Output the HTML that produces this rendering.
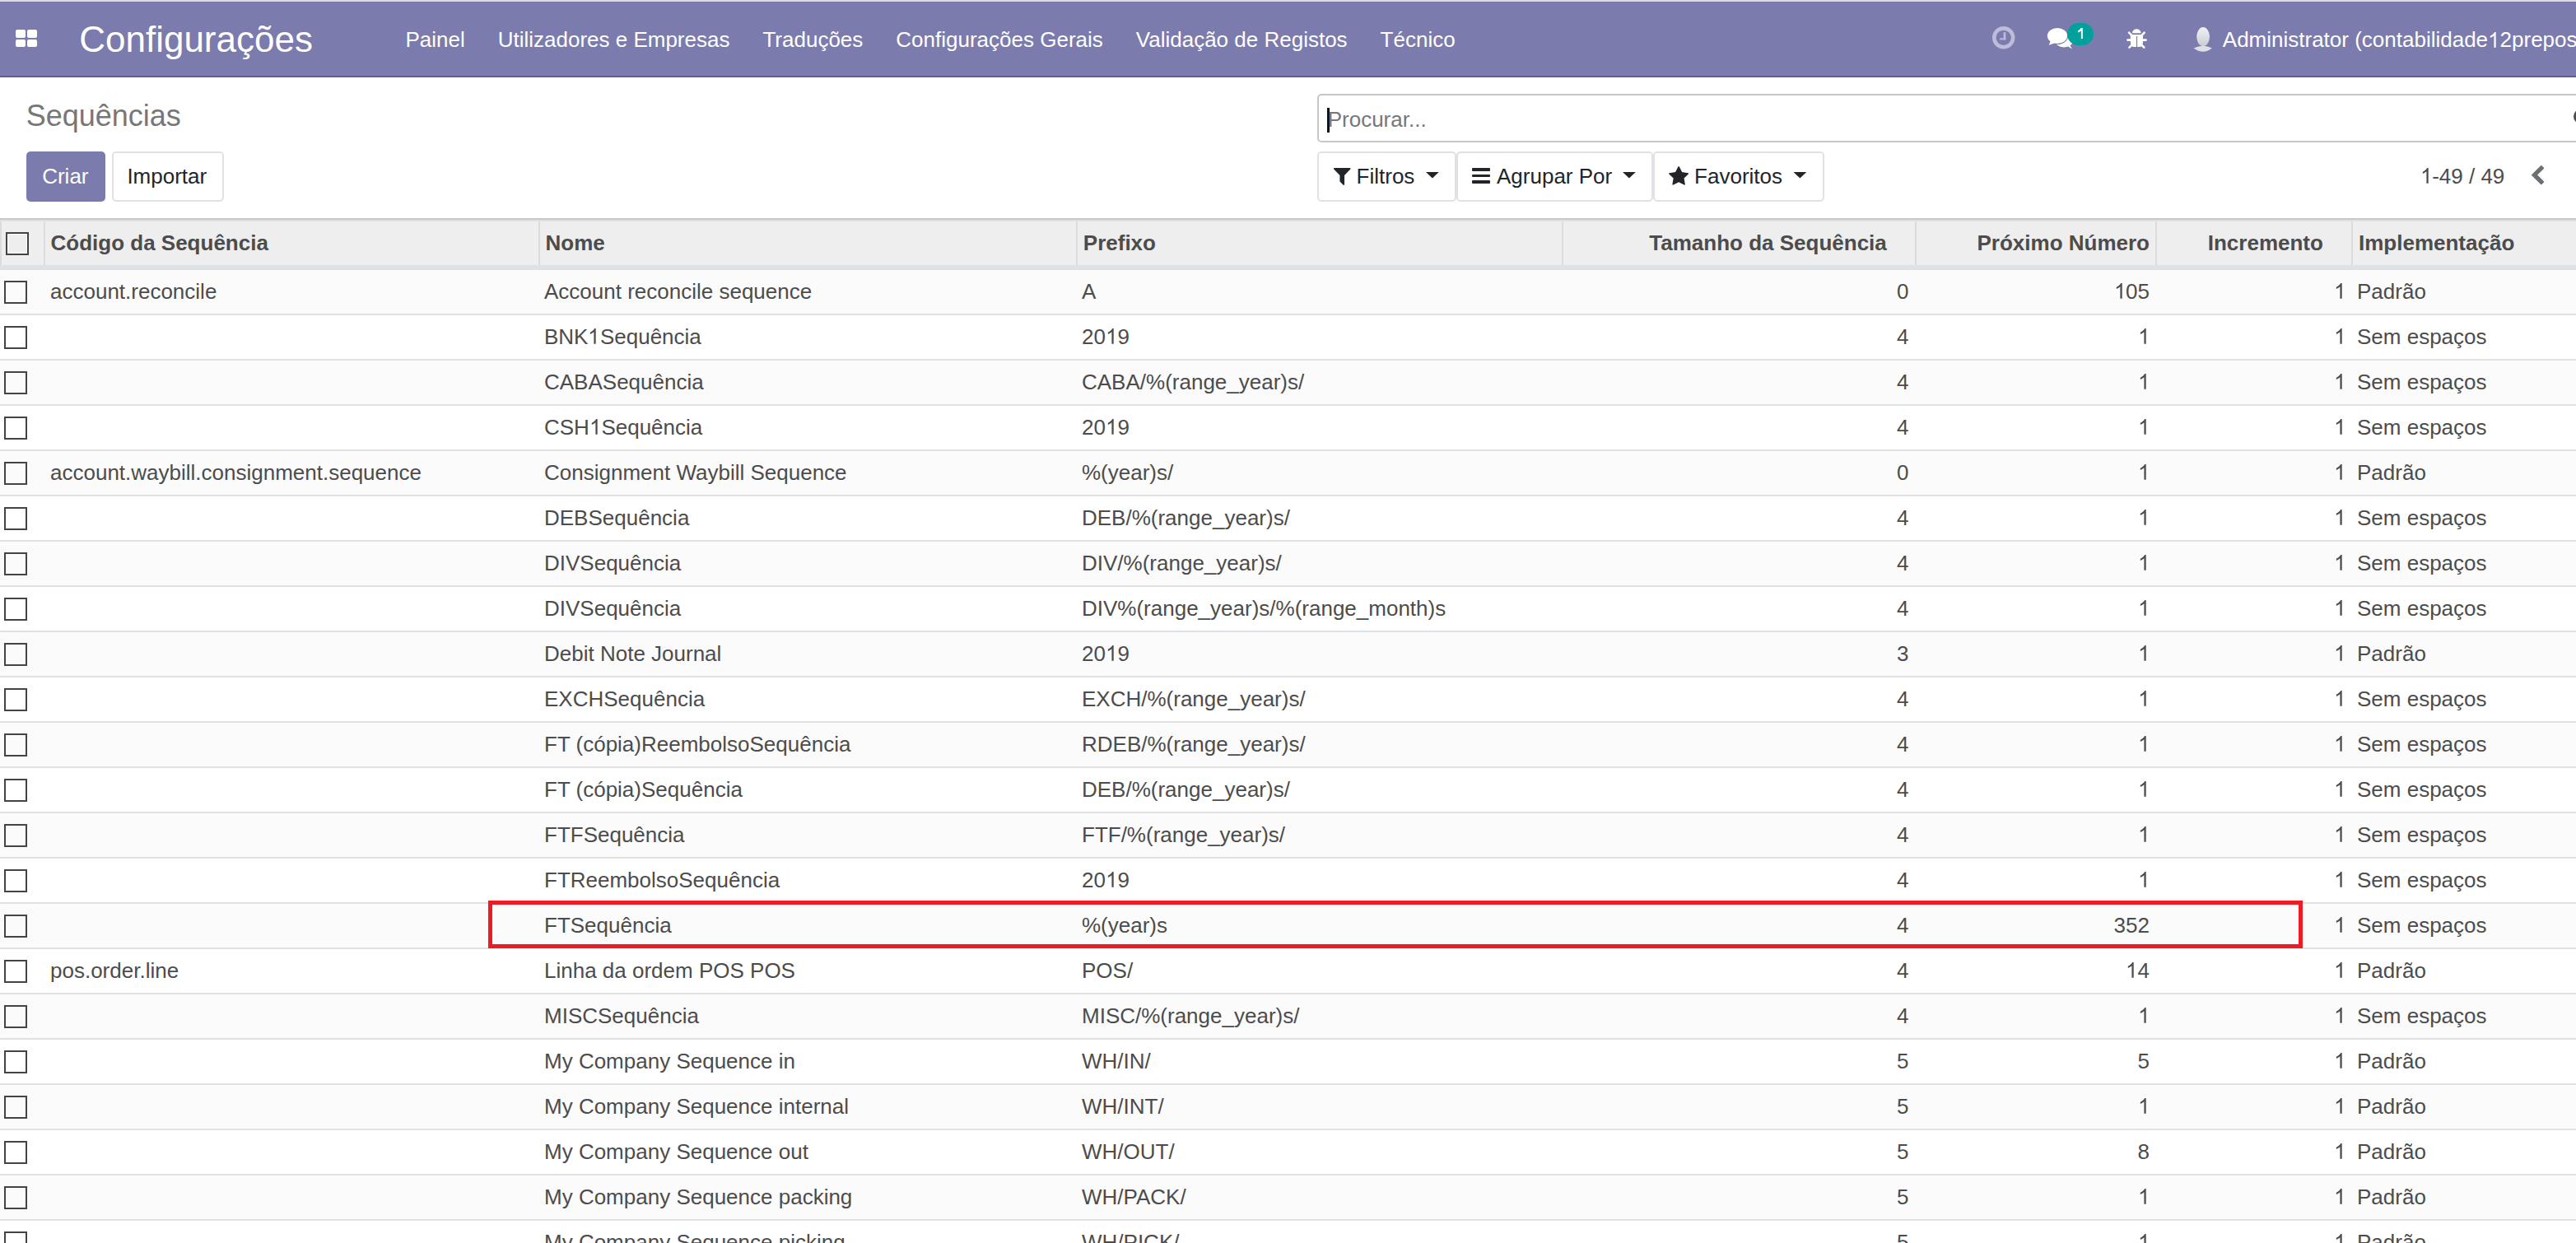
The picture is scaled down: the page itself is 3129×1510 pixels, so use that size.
<!DOCTYPE html>
<html><head><meta charset="utf-8"><title>Sequências - Odoo</title>
<style>
html,body{margin:0;padding:0;}
body{width:3129px;height:1510px;overflow:hidden;position:relative;background:#fff;font-family:"Liberation Sans",sans-serif;}
.t{position:absolute;white-space:pre;}
.cb{position:absolute;box-sizing:border-box;width:28px;height:28px;border:2px solid #444;background:transparent;}
svg{position:absolute;overflow:visible;}
.one{position:relative;color:transparent;}
.one svg{position:absolute;left:0;bottom:6px;width:0.5562em;height:0.71875em;}
</style></head><body>
<div style="position:absolute;left:0px;top:0px;width:3129px;height:2px;background:#dcdce0;"></div>
<div style="position:absolute;left:0px;top:2px;width:3129px;height:90px;background:#7c7bad;"></div>
<div style="position:absolute;left:0px;top:92px;width:3129px;height:2px;background:#5f5e96;"></div>
<div style="position:absolute;left:19.3px;top:35.8px;width:12.1px;height:10.1px;background:#fff;border-radius:2px;"></div>
<div style="position:absolute;left:32.8px;top:35.8px;width:11.8px;height:10.1px;background:#fff;border-radius:2px;"></div>
<div style="position:absolute;left:19.3px;top:47.6px;width:12.1px;height:9.5px;background:#fff;border-radius:2px;"></div>
<div style="position:absolute;left:32.8px;top:47.6px;width:11.8px;height:9.5px;background:#fff;border-radius:2px;"></div>
<div class="t" style="left:96.20px;top:25.75px;font-size:44px;line-height:44px;color:#fff;">Configurações</div>
<div class="t" style="left:492.40px;top:35.29px;font-size:26px;line-height:26px;color:#fff;">Painel</div>
<div class="t" style="left:604.68px;top:35.29px;font-size:26px;line-height:26px;color:#fff;">Utilizadores e Empresas</div>
<div class="t" style="left:926.46px;top:35.29px;font-size:26px;line-height:26px;color:#fff;">Traduções</div>
<div class="t" style="left:1088.34px;top:35.29px;font-size:26px;line-height:26px;color:#fff;">Configurações Gerais</div>
<div class="t" style="left:1379.81px;top:35.29px;font-size:26px;line-height:26px;color:#fff;">Validação de Registos</div>
<div class="t" style="left:1676.60px;top:35.29px;font-size:26px;line-height:26px;color:#fff;">Técnico</div>
<svg style="left:2415px;top:28px" width="40" height="36" viewBox="0 0 40 36"><circle cx="18.7" cy="17.8" r="11.45" fill="none" stroke="#bebdd9" stroke-width="4.6"/><rect x="18.6" y="11.2" width="2.7" height="9.1" fill="#bebdd9"/><rect x="13.9" y="18.4" width="7.4" height="1.9" fill="#bebdd9"/></svg>
<svg style="left:2480px;top:24px" width="70" height="42" viewBox="0 0 70 42"><ellipse cx="27" cy="24.5" rx="11.5" ry="9" fill="#fff"/><path d="M30 31 L36.8 35.5 L34 30 Z" fill="#fff"/><ellipse cx="19" cy="19.5" rx="13.2" ry="10.5" fill="#7c7bad"/><ellipse cx="19" cy="19.5" rx="12.1" ry="9.45" fill="#fff"/><path d="M11 25 L8.8 30.7 L17 28 Z" fill="#fff"/></svg>
<div style="position:absolute;left:2511px;top:28px;width:32px;height:27px;border-radius:13.5px;background:#00a09d;"></div>
<svg style="left:2520px;top:30px" width="14" height="20" viewBox="0 0 14 20"><path d="M7.9 4 H9.8 V17 H7.9 V7.4 Q6 8.8 3.9 9.6 V7.6 Q6.3 6.4 7.6 4 Z" fill="#fff"/></svg>
<svg style="left:2575px;top:28px" width="40" height="36" viewBox="0 0 40 36"><path d="M15 12.2 A5.3 5 0 0 1 25.6 12.2 Z" fill="#fff"/><path d="M12.8 14 H28 V22 Q28 29 24 29 H16.8 Q12.8 29 12.8 22 Z" fill="#fff"/><rect x="20" y="16" width="1.1" height="13.5" fill="#7c7bad"/><g stroke="#fff" stroke-width="2.6" stroke-linecap="round"><line x1="11" y1="11.6" x2="14.5" y2="15.2"/><line x1="29.7" y1="11.6" x2="26.3" y2="15.2"/><line x1="9.4" y1="20.6" x2="13" y2="20.6"/><line x1="31.5" y1="20.6" x2="28" y2="20.6"/><line x1="11.4" y1="29.7" x2="14.8" y2="26.3"/><line x1="29.4" y1="29.7" x2="26" y2="26.3"/></g></svg>
<svg style="left:2655px;top:25px" width="50" height="45" viewBox="0 0 50 45"><defs><linearGradient id="ag" x1="0" y1="0" x2="0" y2="1"><stop offset="0" stop-color="#f0f1f4"/><stop offset="1" stop-color="#c9cdd5"/></linearGradient></defs><path d="M9.6 33.6 Q21 28 32 33.6 Q21 42 9.6 33.6 Z" fill="#dcdfe4"/><ellipse cx="21.1" cy="19.6" rx="7.9" ry="11.5" fill="url(#ag)"/></svg>
<div class="t" style="left:2699.80px;top:35.29px;font-size:26px;line-height:26px;color:#fff;">Administrator (contabilidade<span class="one">1<svg viewBox="0 0 1139 1472" style="fill:#fff"><path transform="matrix(1 0 0 -1 0 1472)" d="M763 0H583V1147Q518 1085 412 1023Q306 961 223 930V1104Q373 1175 485 1276Q597 1377 644 1472H763Z"/></svg></span>2prepos</div>
<div class="t" style="left:31.70px;top:123.33px;font-size:36px;line-height:36px;color:#777777;">Sequências</div>
<div style="position:absolute;left:32px;top:184px;width:96px;height:61px;background:#7c7bad;border-radius:5px;"></div>
<div class="t" style="left:51.20px;top:201.19px;font-size:26px;line-height:26px;color:#fff;">Criar</div>
<div style="position:absolute;left:136px;top:184px;width:136px;height:61px;box-sizing:border-box;border:2px solid #dee2e6;border-radius:5px;background:#fff;"></div>
<div class="t" style="left:154.40px;top:201.19px;font-size:26px;line-height:26px;color:#212529;">Importar</div>
<div style="position:absolute;left:1600px;top:114px;width:1600px;height:59px;box-sizing:border-box;border:2px solid #c8c8c8;border-radius:5px;background:#fff;"></div>
<div style="position:absolute;left:1612px;top:131px;width:3px;height:30px;background:#111;"></div>
<div class="t" style="left:1612.70px;top:132.19px;font-size:26px;line-height:26px;color:#777777;">Procurar...</div>
<div style="position:absolute;left:3126px;top:133px;width:16px;height:17px;border:4.5px solid #4c4c4c;border-radius:50%;box-sizing:border-box;"></div>
<div style="position:absolute;left:1600px;top:184px;width:168.5px;height:61px;box-sizing:border-box;border:2px solid #dee2e6;border-radius:5px;background:#fff;"></div>
<div style="position:absolute;left:1769.3px;top:184px;width:238.5px;height:61px;box-sizing:border-box;border:2px solid #dee2e6;border-radius:5px;background:#fff;"></div>
<div style="position:absolute;left:2008.3px;top:184px;width:208.00000000000023px;height:61px;box-sizing:border-box;border:2px solid #dee2e6;border-radius:5px;background:#fff;"></div>
<svg style="left:1619.9px;top:204.2px" width="20.6" height="20.9" viewBox="5 210 1405 1408" preserveAspectRatio="none"><path d="M1403 249q17 41-14 70l-493 493v742q0 42-39 59-13 5-25 5-27 0-45-19l-256-256q-19-19-19-45v-486l-493-493q-31-29-14-70 17-39 59-39h1280q42 0 59 39z" fill="#212529"/></svg>
<div class="t" style="left:1647.60px;top:200.89px;font-size:26px;line-height:26px;color:#212529;">Filtros</div>
<svg style="left:1732px;top:208.8px" width="16" height="8" viewBox="0 0 16 8"><path d="M0 0 H15.8 L7.9 7.4 Z" fill="#212529"/></svg>
<div style="position:absolute;left:1787.7px;top:204.2px;width:22.5px;height:3.6px;background:#212529;border-radius:1px;"></div>
<div style="position:absolute;left:1787.7px;top:211.7px;width:22.5px;height:3.6px;background:#212529;border-radius:1px;"></div>
<div style="position:absolute;left:1787.7px;top:219.2px;width:22.5px;height:3.6px;background:#212529;border-radius:1px;"></div>
<div class="t" style="left:1818.00px;top:200.89px;font-size:26px;line-height:26px;color:#212529;">Agrupar Por</div>
<svg style="left:1971.2px;top:208.8px" width="16" height="8" viewBox="0 0 16 8"><path d="M0 0 H15.8 L7.9 7.4 Z" fill="#212529"/></svg>
<svg style="left:2026.8px;top:201.5px" width="24.2" height="22.8" viewBox="64 32 1664 1588" preserveAspectRatio="none"><path d="M1728 647q0 22-26 48l-363 354 86 500q1 7 1 20 0 21-10.5 35.5t-30.5 14.5q-19 0-40-12l-449-236-449 236q-21 12-40 12-21 0-31.5-14.5t-10.5-35.5q0-6 2-20l86-500-364-354q-25-27-25-48 0-37 56-46l502-73 225-455q19-41 49-41t49 41l225 455 502 73q56 9 56 46z" fill="#212529"/></svg>
<div class="t" style="left:2058.10px;top:200.89px;font-size:26px;line-height:26px;color:#212529;">Favoritos</div>
<svg style="left:2178px;top:208.8px" width="17" height="8" viewBox="0 0 16 8"><path d="M0 0 H15.8 L7.9 7.4 Z" fill="#212529"/></svg>
<div class="t" style="left:2939.70px;top:200.89px;font-size:26px;line-height:26px;color:#4c4c4c;"><span class="one">1<svg viewBox="0 0 1139 1472" style="fill:#4c4c4c"><path transform="matrix(1 0 0 -1 0 1472)" d="M763 0H583V1147Q518 1085 412 1023Q306 961 223 930V1104Q373 1175 485 1276Q597 1377 644 1472H763Z"/></svg></span>-49 / 49</div>
<svg style="left:3075px;top:201px" width="15.2" height="23.2" viewBox="410 26 1036 1612" preserveAspectRatio="none"><path d="M1427 301l-531 531 531 531q19 19 19 45t-19 45l-166 166q-19 19-45 19t-45-19l-742-742q-19-19-19-45t19-45l742-742q19-19 45-19t45 19l166 166q19 19 19 45t-19 45z" fill="#6c6f73"/></svg>
<div style="position:absolute;left:0px;top:265px;width:3129px;height:2px;background:#c8c8c8;"></div>
<div style="position:absolute;left:0px;top:267px;width:3129px;height:2px;background:#dee2e6;"></div>
<div style="position:absolute;left:0px;top:269px;width:3129px;height:53px;background:#eeeeee;"></div>
<div style="position:absolute;left:0px;top:322px;width:3129px;height:6px;background:#dee2e6;"></div>
<div style="position:absolute;left:0px;top:269px;width:2px;height:53px;background:#dcdcdc;"></div>
<div style="position:absolute;left:53px;top:269px;width:2px;height:53px;background:#dcdcdc;"></div>
<div style="position:absolute;left:654px;top:269px;width:2px;height:53px;background:#dcdcdc;"></div>
<div style="position:absolute;left:1307px;top:269px;width:2px;height:53px;background:#dcdcdc;"></div>
<div style="position:absolute;left:1897px;top:269px;width:2px;height:53px;background:#dcdcdc;"></div>
<div style="position:absolute;left:2326px;top:269px;width:2px;height:53px;background:#dcdcdc;"></div>
<div style="position:absolute;left:2618px;top:269px;width:2px;height:53px;background:#dcdcdc;"></div>
<div style="position:absolute;left:2856px;top:269px;width:2px;height:53px;background:#dcdcdc;"></div>
<div class="cb" style="left:7px;top:282px;background:#eee;box-shadow:inset 0 0 0 1px #fff;"></div>
<div class="t" style="left:61.50px;top:281.99px;font-size:26px;line-height:26px;color:#4c4c4c;font-weight:bold;">Código da Sequência</div>
<div class="t" style="left:662.50px;top:281.99px;font-size:26px;line-height:26px;color:#4c4c4c;font-weight:bold;">Nome</div>
<div class="t" style="left:1315.80px;top:281.99px;font-size:26px;line-height:26px;color:#4c4c4c;font-weight:bold;">Prefixo</div>
<div class="t" style="right:837.20px;top:281.99px;font-size:26px;line-height:26px;color:#4c4c4c;font-weight:bold;">Tamanho da Sequência</div>
<div class="t" style="right:518.00px;top:281.99px;font-size:26px;line-height:26px;color:#4c4c4c;font-weight:bold;">Próximo Número</div>
<div class="t" style="right:307.10px;top:281.99px;font-size:26px;line-height:26px;color:#4c4c4c;font-weight:bold;">Incremento</div>
<div class="t" style="left:2865.00px;top:281.99px;font-size:26px;line-height:26px;color:#4c4c4c;font-weight:bold;">Implementação</div>
<div style="position:absolute;left:0px;top:328px;width:3129px;height:53px;background:#fbfbfb;"></div>
<div style="position:absolute;left:0px;top:381px;width:3129px;height:2px;background:#dee2e6;"></div>
<div class="cb" style="left:5px;top:341px;"></div>
<div class="t" style="left:61.00px;top:340.99px;font-size:26px;line-height:26px;color:#4c4c4c;">account.reconcile</div>
<div class="t" style="left:661.00px;top:340.99px;font-size:26px;line-height:26px;color:#4c4c4c;">Account reconcile sequence</div>
<div class="t" style="left:1314.00px;top:340.99px;font-size:26px;line-height:26px;color:#4c4c4c;">A</div>
<div class="t" style="right:810.50px;top:340.99px;font-size:26px;line-height:26px;color:#4c4c4c;">0</div>
<div class="t" style="right:518.00px;top:340.99px;font-size:26px;line-height:26px;color:#4c4c4c;"><span class="one">1<svg viewBox="0 0 1139 1472" style="fill:#4c4c4c"><path transform="matrix(1 0 0 -1 0 1472)" d="M763 0H583V1147Q518 1085 412 1023Q306 961 223 930V1104Q373 1175 485 1276Q597 1377 644 1472H763Z"/></svg></span>05</div>
<div class="t" style="right:279.50px;top:340.99px;font-size:26px;line-height:26px;color:#4c4c4c;"><span class="one">1<svg viewBox="0 0 1139 1472" style="fill:#4c4c4c"><path transform="matrix(1 0 0 -1 0 1472)" d="M763 0H583V1147Q518 1085 412 1023Q306 961 223 930V1104Q373 1175 485 1276Q597 1377 644 1472H763Z"/></svg></span></div>
<div class="t" style="left:2863.00px;top:340.99px;font-size:26px;line-height:26px;color:#4c4c4c;">Padrão</div>
<div style="position:absolute;left:0px;top:383px;width:3129px;height:53px;background:#ffffff;"></div>
<div style="position:absolute;left:0px;top:436px;width:3129px;height:2px;background:#dee2e6;"></div>
<div class="cb" style="left:5px;top:396px;"></div>
<div class="t" style="left:661.00px;top:395.99px;font-size:26px;line-height:26px;color:#4c4c4c;">BNK<span class="one">1<svg viewBox="0 0 1139 1472" style="fill:#4c4c4c"><path transform="matrix(1 0 0 -1 0 1472)" d="M763 0H583V1147Q518 1085 412 1023Q306 961 223 930V1104Q373 1175 485 1276Q597 1377 644 1472H763Z"/></svg></span>Sequência</div>
<div class="t" style="left:1314.00px;top:395.99px;font-size:26px;line-height:26px;color:#4c4c4c;">20<span class="one">1<svg viewBox="0 0 1139 1472" style="fill:#4c4c4c"><path transform="matrix(1 0 0 -1 0 1472)" d="M763 0H583V1147Q518 1085 412 1023Q306 961 223 930V1104Q373 1175 485 1276Q597 1377 644 1472H763Z"/></svg></span>9</div>
<div class="t" style="right:810.50px;top:395.99px;font-size:26px;line-height:26px;color:#4c4c4c;">4</div>
<div class="t" style="right:518.00px;top:395.99px;font-size:26px;line-height:26px;color:#4c4c4c;"><span class="one">1<svg viewBox="0 0 1139 1472" style="fill:#4c4c4c"><path transform="matrix(1 0 0 -1 0 1472)" d="M763 0H583V1147Q518 1085 412 1023Q306 961 223 930V1104Q373 1175 485 1276Q597 1377 644 1472H763Z"/></svg></span></div>
<div class="t" style="right:279.50px;top:395.99px;font-size:26px;line-height:26px;color:#4c4c4c;"><span class="one">1<svg viewBox="0 0 1139 1472" style="fill:#4c4c4c"><path transform="matrix(1 0 0 -1 0 1472)" d="M763 0H583V1147Q518 1085 412 1023Q306 961 223 930V1104Q373 1175 485 1276Q597 1377 644 1472H763Z"/></svg></span></div>
<div class="t" style="left:2863.00px;top:395.99px;font-size:26px;line-height:26px;color:#4c4c4c;">Sem espaços</div>
<div style="position:absolute;left:0px;top:438px;width:3129px;height:53px;background:#fbfbfb;"></div>
<div style="position:absolute;left:0px;top:491px;width:3129px;height:2px;background:#dee2e6;"></div>
<div class="cb" style="left:5px;top:451px;"></div>
<div class="t" style="left:661.00px;top:450.99px;font-size:26px;line-height:26px;color:#4c4c4c;">CABASequência</div>
<div class="t" style="left:1314.00px;top:450.99px;font-size:26px;line-height:26px;color:#4c4c4c;">CABA/%(range_year)s/</div>
<div class="t" style="right:810.50px;top:450.99px;font-size:26px;line-height:26px;color:#4c4c4c;">4</div>
<div class="t" style="right:518.00px;top:450.99px;font-size:26px;line-height:26px;color:#4c4c4c;"><span class="one">1<svg viewBox="0 0 1139 1472" style="fill:#4c4c4c"><path transform="matrix(1 0 0 -1 0 1472)" d="M763 0H583V1147Q518 1085 412 1023Q306 961 223 930V1104Q373 1175 485 1276Q597 1377 644 1472H763Z"/></svg></span></div>
<div class="t" style="right:279.50px;top:450.99px;font-size:26px;line-height:26px;color:#4c4c4c;"><span class="one">1<svg viewBox="0 0 1139 1472" style="fill:#4c4c4c"><path transform="matrix(1 0 0 -1 0 1472)" d="M763 0H583V1147Q518 1085 412 1023Q306 961 223 930V1104Q373 1175 485 1276Q597 1377 644 1472H763Z"/></svg></span></div>
<div class="t" style="left:2863.00px;top:450.99px;font-size:26px;line-height:26px;color:#4c4c4c;">Sem espaços</div>
<div style="position:absolute;left:0px;top:493px;width:3129px;height:53px;background:#ffffff;"></div>
<div style="position:absolute;left:0px;top:546px;width:3129px;height:2px;background:#dee2e6;"></div>
<div class="cb" style="left:5px;top:506px;"></div>
<div class="t" style="left:661.00px;top:505.99px;font-size:26px;line-height:26px;color:#4c4c4c;">CSH<span class="one">1<svg viewBox="0 0 1139 1472" style="fill:#4c4c4c"><path transform="matrix(1 0 0 -1 0 1472)" d="M763 0H583V1147Q518 1085 412 1023Q306 961 223 930V1104Q373 1175 485 1276Q597 1377 644 1472H763Z"/></svg></span>Sequência</div>
<div class="t" style="left:1314.00px;top:505.99px;font-size:26px;line-height:26px;color:#4c4c4c;">20<span class="one">1<svg viewBox="0 0 1139 1472" style="fill:#4c4c4c"><path transform="matrix(1 0 0 -1 0 1472)" d="M763 0H583V1147Q518 1085 412 1023Q306 961 223 930V1104Q373 1175 485 1276Q597 1377 644 1472H763Z"/></svg></span>9</div>
<div class="t" style="right:810.50px;top:505.99px;font-size:26px;line-height:26px;color:#4c4c4c;">4</div>
<div class="t" style="right:518.00px;top:505.99px;font-size:26px;line-height:26px;color:#4c4c4c;"><span class="one">1<svg viewBox="0 0 1139 1472" style="fill:#4c4c4c"><path transform="matrix(1 0 0 -1 0 1472)" d="M763 0H583V1147Q518 1085 412 1023Q306 961 223 930V1104Q373 1175 485 1276Q597 1377 644 1472H763Z"/></svg></span></div>
<div class="t" style="right:279.50px;top:505.99px;font-size:26px;line-height:26px;color:#4c4c4c;"><span class="one">1<svg viewBox="0 0 1139 1472" style="fill:#4c4c4c"><path transform="matrix(1 0 0 -1 0 1472)" d="M763 0H583V1147Q518 1085 412 1023Q306 961 223 930V1104Q373 1175 485 1276Q597 1377 644 1472H763Z"/></svg></span></div>
<div class="t" style="left:2863.00px;top:505.99px;font-size:26px;line-height:26px;color:#4c4c4c;">Sem espaços</div>
<div style="position:absolute;left:0px;top:548px;width:3129px;height:53px;background:#fbfbfb;"></div>
<div style="position:absolute;left:0px;top:601px;width:3129px;height:2px;background:#dee2e6;"></div>
<div class="cb" style="left:5px;top:561px;"></div>
<div class="t" style="left:61.00px;top:560.99px;font-size:26px;line-height:26px;color:#4c4c4c;">account.waybill.consignment.sequence</div>
<div class="t" style="left:661.00px;top:560.99px;font-size:26px;line-height:26px;color:#4c4c4c;">Consignment Waybill Sequence</div>
<div class="t" style="left:1314.00px;top:560.99px;font-size:26px;line-height:26px;color:#4c4c4c;">%(year)s/</div>
<div class="t" style="right:810.50px;top:560.99px;font-size:26px;line-height:26px;color:#4c4c4c;">0</div>
<div class="t" style="right:518.00px;top:560.99px;font-size:26px;line-height:26px;color:#4c4c4c;"><span class="one">1<svg viewBox="0 0 1139 1472" style="fill:#4c4c4c"><path transform="matrix(1 0 0 -1 0 1472)" d="M763 0H583V1147Q518 1085 412 1023Q306 961 223 930V1104Q373 1175 485 1276Q597 1377 644 1472H763Z"/></svg></span></div>
<div class="t" style="right:279.50px;top:560.99px;font-size:26px;line-height:26px;color:#4c4c4c;"><span class="one">1<svg viewBox="0 0 1139 1472" style="fill:#4c4c4c"><path transform="matrix(1 0 0 -1 0 1472)" d="M763 0H583V1147Q518 1085 412 1023Q306 961 223 930V1104Q373 1175 485 1276Q597 1377 644 1472H763Z"/></svg></span></div>
<div class="t" style="left:2863.00px;top:560.99px;font-size:26px;line-height:26px;color:#4c4c4c;">Padrão</div>
<div style="position:absolute;left:0px;top:603px;width:3129px;height:53px;background:#ffffff;"></div>
<div style="position:absolute;left:0px;top:656px;width:3129px;height:2px;background:#dee2e6;"></div>
<div class="cb" style="left:5px;top:616px;"></div>
<div class="t" style="left:661.00px;top:615.99px;font-size:26px;line-height:26px;color:#4c4c4c;">DEBSequência</div>
<div class="t" style="left:1314.00px;top:615.99px;font-size:26px;line-height:26px;color:#4c4c4c;">DEB/%(range_year)s/</div>
<div class="t" style="right:810.50px;top:615.99px;font-size:26px;line-height:26px;color:#4c4c4c;">4</div>
<div class="t" style="right:518.00px;top:615.99px;font-size:26px;line-height:26px;color:#4c4c4c;"><span class="one">1<svg viewBox="0 0 1139 1472" style="fill:#4c4c4c"><path transform="matrix(1 0 0 -1 0 1472)" d="M763 0H583V1147Q518 1085 412 1023Q306 961 223 930V1104Q373 1175 485 1276Q597 1377 644 1472H763Z"/></svg></span></div>
<div class="t" style="right:279.50px;top:615.99px;font-size:26px;line-height:26px;color:#4c4c4c;"><span class="one">1<svg viewBox="0 0 1139 1472" style="fill:#4c4c4c"><path transform="matrix(1 0 0 -1 0 1472)" d="M763 0H583V1147Q518 1085 412 1023Q306 961 223 930V1104Q373 1175 485 1276Q597 1377 644 1472H763Z"/></svg></span></div>
<div class="t" style="left:2863.00px;top:615.99px;font-size:26px;line-height:26px;color:#4c4c4c;">Sem espaços</div>
<div style="position:absolute;left:0px;top:658px;width:3129px;height:53px;background:#fbfbfb;"></div>
<div style="position:absolute;left:0px;top:711px;width:3129px;height:2px;background:#dee2e6;"></div>
<div class="cb" style="left:5px;top:671px;"></div>
<div class="t" style="left:661.00px;top:670.99px;font-size:26px;line-height:26px;color:#4c4c4c;">DIVSequência</div>
<div class="t" style="left:1314.00px;top:670.99px;font-size:26px;line-height:26px;color:#4c4c4c;">DIV/%(range_year)s/</div>
<div class="t" style="right:810.50px;top:670.99px;font-size:26px;line-height:26px;color:#4c4c4c;">4</div>
<div class="t" style="right:518.00px;top:670.99px;font-size:26px;line-height:26px;color:#4c4c4c;"><span class="one">1<svg viewBox="0 0 1139 1472" style="fill:#4c4c4c"><path transform="matrix(1 0 0 -1 0 1472)" d="M763 0H583V1147Q518 1085 412 1023Q306 961 223 930V1104Q373 1175 485 1276Q597 1377 644 1472H763Z"/></svg></span></div>
<div class="t" style="right:279.50px;top:670.99px;font-size:26px;line-height:26px;color:#4c4c4c;"><span class="one">1<svg viewBox="0 0 1139 1472" style="fill:#4c4c4c"><path transform="matrix(1 0 0 -1 0 1472)" d="M763 0H583V1147Q518 1085 412 1023Q306 961 223 930V1104Q373 1175 485 1276Q597 1377 644 1472H763Z"/></svg></span></div>
<div class="t" style="left:2863.00px;top:670.99px;font-size:26px;line-height:26px;color:#4c4c4c;">Sem espaços</div>
<div style="position:absolute;left:0px;top:713px;width:3129px;height:53px;background:#ffffff;"></div>
<div style="position:absolute;left:0px;top:766px;width:3129px;height:2px;background:#dee2e6;"></div>
<div class="cb" style="left:5px;top:726px;"></div>
<div class="t" style="left:661.00px;top:725.99px;font-size:26px;line-height:26px;color:#4c4c4c;">DIVSequência</div>
<div class="t" style="left:1314.00px;top:725.99px;font-size:26px;line-height:26px;color:#4c4c4c;">DIV%(range_year)s/%(range_month)s</div>
<div class="t" style="right:810.50px;top:725.99px;font-size:26px;line-height:26px;color:#4c4c4c;">4</div>
<div class="t" style="right:518.00px;top:725.99px;font-size:26px;line-height:26px;color:#4c4c4c;"><span class="one">1<svg viewBox="0 0 1139 1472" style="fill:#4c4c4c"><path transform="matrix(1 0 0 -1 0 1472)" d="M763 0H583V1147Q518 1085 412 1023Q306 961 223 930V1104Q373 1175 485 1276Q597 1377 644 1472H763Z"/></svg></span></div>
<div class="t" style="right:279.50px;top:725.99px;font-size:26px;line-height:26px;color:#4c4c4c;"><span class="one">1<svg viewBox="0 0 1139 1472" style="fill:#4c4c4c"><path transform="matrix(1 0 0 -1 0 1472)" d="M763 0H583V1147Q518 1085 412 1023Q306 961 223 930V1104Q373 1175 485 1276Q597 1377 644 1472H763Z"/></svg></span></div>
<div class="t" style="left:2863.00px;top:725.99px;font-size:26px;line-height:26px;color:#4c4c4c;">Sem espaços</div>
<div style="position:absolute;left:0px;top:768px;width:3129px;height:53px;background:#fbfbfb;"></div>
<div style="position:absolute;left:0px;top:821px;width:3129px;height:2px;background:#dee2e6;"></div>
<div class="cb" style="left:5px;top:781px;"></div>
<div class="t" style="left:661.00px;top:780.99px;font-size:26px;line-height:26px;color:#4c4c4c;">Debit Note Journal</div>
<div class="t" style="left:1314.00px;top:780.99px;font-size:26px;line-height:26px;color:#4c4c4c;">20<span class="one">1<svg viewBox="0 0 1139 1472" style="fill:#4c4c4c"><path transform="matrix(1 0 0 -1 0 1472)" d="M763 0H583V1147Q518 1085 412 1023Q306 961 223 930V1104Q373 1175 485 1276Q597 1377 644 1472H763Z"/></svg></span>9</div>
<div class="t" style="right:810.50px;top:780.99px;font-size:26px;line-height:26px;color:#4c4c4c;">3</div>
<div class="t" style="right:518.00px;top:780.99px;font-size:26px;line-height:26px;color:#4c4c4c;"><span class="one">1<svg viewBox="0 0 1139 1472" style="fill:#4c4c4c"><path transform="matrix(1 0 0 -1 0 1472)" d="M763 0H583V1147Q518 1085 412 1023Q306 961 223 930V1104Q373 1175 485 1276Q597 1377 644 1472H763Z"/></svg></span></div>
<div class="t" style="right:279.50px;top:780.99px;font-size:26px;line-height:26px;color:#4c4c4c;"><span class="one">1<svg viewBox="0 0 1139 1472" style="fill:#4c4c4c"><path transform="matrix(1 0 0 -1 0 1472)" d="M763 0H583V1147Q518 1085 412 1023Q306 961 223 930V1104Q373 1175 485 1276Q597 1377 644 1472H763Z"/></svg></span></div>
<div class="t" style="left:2863.00px;top:780.99px;font-size:26px;line-height:26px;color:#4c4c4c;">Padrão</div>
<div style="position:absolute;left:0px;top:823px;width:3129px;height:53px;background:#ffffff;"></div>
<div style="position:absolute;left:0px;top:876px;width:3129px;height:2px;background:#dee2e6;"></div>
<div class="cb" style="left:5px;top:836px;"></div>
<div class="t" style="left:661.00px;top:835.99px;font-size:26px;line-height:26px;color:#4c4c4c;">EXCHSequência</div>
<div class="t" style="left:1314.00px;top:835.99px;font-size:26px;line-height:26px;color:#4c4c4c;">EXCH/%(range_year)s/</div>
<div class="t" style="right:810.50px;top:835.99px;font-size:26px;line-height:26px;color:#4c4c4c;">4</div>
<div class="t" style="right:518.00px;top:835.99px;font-size:26px;line-height:26px;color:#4c4c4c;"><span class="one">1<svg viewBox="0 0 1139 1472" style="fill:#4c4c4c"><path transform="matrix(1 0 0 -1 0 1472)" d="M763 0H583V1147Q518 1085 412 1023Q306 961 223 930V1104Q373 1175 485 1276Q597 1377 644 1472H763Z"/></svg></span></div>
<div class="t" style="right:279.50px;top:835.99px;font-size:26px;line-height:26px;color:#4c4c4c;"><span class="one">1<svg viewBox="0 0 1139 1472" style="fill:#4c4c4c"><path transform="matrix(1 0 0 -1 0 1472)" d="M763 0H583V1147Q518 1085 412 1023Q306 961 223 930V1104Q373 1175 485 1276Q597 1377 644 1472H763Z"/></svg></span></div>
<div class="t" style="left:2863.00px;top:835.99px;font-size:26px;line-height:26px;color:#4c4c4c;">Sem espaços</div>
<div style="position:absolute;left:0px;top:878px;width:3129px;height:53px;background:#fbfbfb;"></div>
<div style="position:absolute;left:0px;top:931px;width:3129px;height:2px;background:#dee2e6;"></div>
<div class="cb" style="left:5px;top:891px;"></div>
<div class="t" style="left:661.00px;top:890.99px;font-size:26px;line-height:26px;color:#4c4c4c;">FT (cópia)ReembolsoSequência</div>
<div class="t" style="left:1314.00px;top:890.99px;font-size:26px;line-height:26px;color:#4c4c4c;">RDEB/%(range_year)s/</div>
<div class="t" style="right:810.50px;top:890.99px;font-size:26px;line-height:26px;color:#4c4c4c;">4</div>
<div class="t" style="right:518.00px;top:890.99px;font-size:26px;line-height:26px;color:#4c4c4c;"><span class="one">1<svg viewBox="0 0 1139 1472" style="fill:#4c4c4c"><path transform="matrix(1 0 0 -1 0 1472)" d="M763 0H583V1147Q518 1085 412 1023Q306 961 223 930V1104Q373 1175 485 1276Q597 1377 644 1472H763Z"/></svg></span></div>
<div class="t" style="right:279.50px;top:890.99px;font-size:26px;line-height:26px;color:#4c4c4c;"><span class="one">1<svg viewBox="0 0 1139 1472" style="fill:#4c4c4c"><path transform="matrix(1 0 0 -1 0 1472)" d="M763 0H583V1147Q518 1085 412 1023Q306 961 223 930V1104Q373 1175 485 1276Q597 1377 644 1472H763Z"/></svg></span></div>
<div class="t" style="left:2863.00px;top:890.99px;font-size:26px;line-height:26px;color:#4c4c4c;">Sem espaços</div>
<div style="position:absolute;left:0px;top:933px;width:3129px;height:53px;background:#ffffff;"></div>
<div style="position:absolute;left:0px;top:986px;width:3129px;height:2px;background:#dee2e6;"></div>
<div class="cb" style="left:5px;top:946px;"></div>
<div class="t" style="left:661.00px;top:945.99px;font-size:26px;line-height:26px;color:#4c4c4c;">FT (cópia)Sequência</div>
<div class="t" style="left:1314.00px;top:945.99px;font-size:26px;line-height:26px;color:#4c4c4c;">DEB/%(range_year)s/</div>
<div class="t" style="right:810.50px;top:945.99px;font-size:26px;line-height:26px;color:#4c4c4c;">4</div>
<div class="t" style="right:518.00px;top:945.99px;font-size:26px;line-height:26px;color:#4c4c4c;"><span class="one">1<svg viewBox="0 0 1139 1472" style="fill:#4c4c4c"><path transform="matrix(1 0 0 -1 0 1472)" d="M763 0H583V1147Q518 1085 412 1023Q306 961 223 930V1104Q373 1175 485 1276Q597 1377 644 1472H763Z"/></svg></span></div>
<div class="t" style="right:279.50px;top:945.99px;font-size:26px;line-height:26px;color:#4c4c4c;"><span class="one">1<svg viewBox="0 0 1139 1472" style="fill:#4c4c4c"><path transform="matrix(1 0 0 -1 0 1472)" d="M763 0H583V1147Q518 1085 412 1023Q306 961 223 930V1104Q373 1175 485 1276Q597 1377 644 1472H763Z"/></svg></span></div>
<div class="t" style="left:2863.00px;top:945.99px;font-size:26px;line-height:26px;color:#4c4c4c;">Sem espaços</div>
<div style="position:absolute;left:0px;top:988px;width:3129px;height:53px;background:#fbfbfb;"></div>
<div style="position:absolute;left:0px;top:1041px;width:3129px;height:2px;background:#dee2e6;"></div>
<div class="cb" style="left:5px;top:1001px;"></div>
<div class="t" style="left:661.00px;top:1000.99px;font-size:26px;line-height:26px;color:#4c4c4c;">FTFSequência</div>
<div class="t" style="left:1314.00px;top:1000.99px;font-size:26px;line-height:26px;color:#4c4c4c;">FTF/%(range_year)s/</div>
<div class="t" style="right:810.50px;top:1000.99px;font-size:26px;line-height:26px;color:#4c4c4c;">4</div>
<div class="t" style="right:518.00px;top:1000.99px;font-size:26px;line-height:26px;color:#4c4c4c;"><span class="one">1<svg viewBox="0 0 1139 1472" style="fill:#4c4c4c"><path transform="matrix(1 0 0 -1 0 1472)" d="M763 0H583V1147Q518 1085 412 1023Q306 961 223 930V1104Q373 1175 485 1276Q597 1377 644 1472H763Z"/></svg></span></div>
<div class="t" style="right:279.50px;top:1000.99px;font-size:26px;line-height:26px;color:#4c4c4c;"><span class="one">1<svg viewBox="0 0 1139 1472" style="fill:#4c4c4c"><path transform="matrix(1 0 0 -1 0 1472)" d="M763 0H583V1147Q518 1085 412 1023Q306 961 223 930V1104Q373 1175 485 1276Q597 1377 644 1472H763Z"/></svg></span></div>
<div class="t" style="left:2863.00px;top:1000.99px;font-size:26px;line-height:26px;color:#4c4c4c;">Sem espaços</div>
<div style="position:absolute;left:0px;top:1043px;width:3129px;height:53px;background:#ffffff;"></div>
<div style="position:absolute;left:0px;top:1096px;width:3129px;height:2px;background:#dee2e6;"></div>
<div class="cb" style="left:5px;top:1056px;"></div>
<div class="t" style="left:661.00px;top:1055.99px;font-size:26px;line-height:26px;color:#4c4c4c;">FTReembolsoSequência</div>
<div class="t" style="left:1314.00px;top:1055.99px;font-size:26px;line-height:26px;color:#4c4c4c;">20<span class="one">1<svg viewBox="0 0 1139 1472" style="fill:#4c4c4c"><path transform="matrix(1 0 0 -1 0 1472)" d="M763 0H583V1147Q518 1085 412 1023Q306 961 223 930V1104Q373 1175 485 1276Q597 1377 644 1472H763Z"/></svg></span>9</div>
<div class="t" style="right:810.50px;top:1055.99px;font-size:26px;line-height:26px;color:#4c4c4c;">4</div>
<div class="t" style="right:518.00px;top:1055.99px;font-size:26px;line-height:26px;color:#4c4c4c;"><span class="one">1<svg viewBox="0 0 1139 1472" style="fill:#4c4c4c"><path transform="matrix(1 0 0 -1 0 1472)" d="M763 0H583V1147Q518 1085 412 1023Q306 961 223 930V1104Q373 1175 485 1276Q597 1377 644 1472H763Z"/></svg></span></div>
<div class="t" style="right:279.50px;top:1055.99px;font-size:26px;line-height:26px;color:#4c4c4c;"><span class="one">1<svg viewBox="0 0 1139 1472" style="fill:#4c4c4c"><path transform="matrix(1 0 0 -1 0 1472)" d="M763 0H583V1147Q518 1085 412 1023Q306 961 223 930V1104Q373 1175 485 1276Q597 1377 644 1472H763Z"/></svg></span></div>
<div class="t" style="left:2863.00px;top:1055.99px;font-size:26px;line-height:26px;color:#4c4c4c;">Sem espaços</div>
<div style="position:absolute;left:0px;top:1098px;width:3129px;height:53px;background:#fbfbfb;"></div>
<div style="position:absolute;left:0px;top:1151px;width:3129px;height:2px;background:#dee2e6;"></div>
<div class="cb" style="left:5px;top:1111px;"></div>
<div class="t" style="left:661.00px;top:1110.99px;font-size:26px;line-height:26px;color:#4c4c4c;">FTSequência</div>
<div class="t" style="left:1314.00px;top:1110.99px;font-size:26px;line-height:26px;color:#4c4c4c;">%(year)s</div>
<div class="t" style="right:810.50px;top:1110.99px;font-size:26px;line-height:26px;color:#4c4c4c;">4</div>
<div class="t" style="right:518.00px;top:1110.99px;font-size:26px;line-height:26px;color:#4c4c4c;">352</div>
<div class="t" style="right:279.50px;top:1110.99px;font-size:26px;line-height:26px;color:#4c4c4c;"><span class="one">1<svg viewBox="0 0 1139 1472" style="fill:#4c4c4c"><path transform="matrix(1 0 0 -1 0 1472)" d="M763 0H583V1147Q518 1085 412 1023Q306 961 223 930V1104Q373 1175 485 1276Q597 1377 644 1472H763Z"/></svg></span></div>
<div class="t" style="left:2863.00px;top:1110.99px;font-size:26px;line-height:26px;color:#4c4c4c;">Sem espaços</div>
<div style="position:absolute;left:0px;top:1153px;width:3129px;height:53px;background:#ffffff;"></div>
<div style="position:absolute;left:0px;top:1206px;width:3129px;height:2px;background:#dee2e6;"></div>
<div class="cb" style="left:5px;top:1166px;"></div>
<div class="t" style="left:61.00px;top:1165.99px;font-size:26px;line-height:26px;color:#4c4c4c;">pos.order.line</div>
<div class="t" style="left:661.00px;top:1165.99px;font-size:26px;line-height:26px;color:#4c4c4c;">Linha da ordem POS POS</div>
<div class="t" style="left:1314.00px;top:1165.99px;font-size:26px;line-height:26px;color:#4c4c4c;">POS/</div>
<div class="t" style="right:810.50px;top:1165.99px;font-size:26px;line-height:26px;color:#4c4c4c;">4</div>
<div class="t" style="right:518.00px;top:1165.99px;font-size:26px;line-height:26px;color:#4c4c4c;"><span class="one">1<svg viewBox="0 0 1139 1472" style="fill:#4c4c4c"><path transform="matrix(1 0 0 -1 0 1472)" d="M763 0H583V1147Q518 1085 412 1023Q306 961 223 930V1104Q373 1175 485 1276Q597 1377 644 1472H763Z"/></svg></span>4</div>
<div class="t" style="right:279.50px;top:1165.99px;font-size:26px;line-height:26px;color:#4c4c4c;"><span class="one">1<svg viewBox="0 0 1139 1472" style="fill:#4c4c4c"><path transform="matrix(1 0 0 -1 0 1472)" d="M763 0H583V1147Q518 1085 412 1023Q306 961 223 930V1104Q373 1175 485 1276Q597 1377 644 1472H763Z"/></svg></span></div>
<div class="t" style="left:2863.00px;top:1165.99px;font-size:26px;line-height:26px;color:#4c4c4c;">Padrão</div>
<div style="position:absolute;left:0px;top:1208px;width:3129px;height:53px;background:#fbfbfb;"></div>
<div style="position:absolute;left:0px;top:1261px;width:3129px;height:2px;background:#dee2e6;"></div>
<div class="cb" style="left:5px;top:1221px;"></div>
<div class="t" style="left:661.00px;top:1220.99px;font-size:26px;line-height:26px;color:#4c4c4c;">MISCSequência</div>
<div class="t" style="left:1314.00px;top:1220.99px;font-size:26px;line-height:26px;color:#4c4c4c;">MISC/%(range_year)s/</div>
<div class="t" style="right:810.50px;top:1220.99px;font-size:26px;line-height:26px;color:#4c4c4c;">4</div>
<div class="t" style="right:518.00px;top:1220.99px;font-size:26px;line-height:26px;color:#4c4c4c;"><span class="one">1<svg viewBox="0 0 1139 1472" style="fill:#4c4c4c"><path transform="matrix(1 0 0 -1 0 1472)" d="M763 0H583V1147Q518 1085 412 1023Q306 961 223 930V1104Q373 1175 485 1276Q597 1377 644 1472H763Z"/></svg></span></div>
<div class="t" style="right:279.50px;top:1220.99px;font-size:26px;line-height:26px;color:#4c4c4c;"><span class="one">1<svg viewBox="0 0 1139 1472" style="fill:#4c4c4c"><path transform="matrix(1 0 0 -1 0 1472)" d="M763 0H583V1147Q518 1085 412 1023Q306 961 223 930V1104Q373 1175 485 1276Q597 1377 644 1472H763Z"/></svg></span></div>
<div class="t" style="left:2863.00px;top:1220.99px;font-size:26px;line-height:26px;color:#4c4c4c;">Sem espaços</div>
<div style="position:absolute;left:0px;top:1263px;width:3129px;height:53px;background:#ffffff;"></div>
<div style="position:absolute;left:0px;top:1316px;width:3129px;height:2px;background:#dee2e6;"></div>
<div class="cb" style="left:5px;top:1276px;"></div>
<div class="t" style="left:661.00px;top:1275.99px;font-size:26px;line-height:26px;color:#4c4c4c;">My Company Sequence in</div>
<div class="t" style="left:1314.00px;top:1275.99px;font-size:26px;line-height:26px;color:#4c4c4c;">WH/IN/</div>
<div class="t" style="right:810.50px;top:1275.99px;font-size:26px;line-height:26px;color:#4c4c4c;">5</div>
<div class="t" style="right:518.00px;top:1275.99px;font-size:26px;line-height:26px;color:#4c4c4c;">5</div>
<div class="t" style="right:279.50px;top:1275.99px;font-size:26px;line-height:26px;color:#4c4c4c;"><span class="one">1<svg viewBox="0 0 1139 1472" style="fill:#4c4c4c"><path transform="matrix(1 0 0 -1 0 1472)" d="M763 0H583V1147Q518 1085 412 1023Q306 961 223 930V1104Q373 1175 485 1276Q597 1377 644 1472H763Z"/></svg></span></div>
<div class="t" style="left:2863.00px;top:1275.99px;font-size:26px;line-height:26px;color:#4c4c4c;">Padrão</div>
<div style="position:absolute;left:0px;top:1318px;width:3129px;height:53px;background:#fbfbfb;"></div>
<div style="position:absolute;left:0px;top:1371px;width:3129px;height:2px;background:#dee2e6;"></div>
<div class="cb" style="left:5px;top:1331px;"></div>
<div class="t" style="left:661.00px;top:1330.99px;font-size:26px;line-height:26px;color:#4c4c4c;">My Company Sequence internal</div>
<div class="t" style="left:1314.00px;top:1330.99px;font-size:26px;line-height:26px;color:#4c4c4c;">WH/INT/</div>
<div class="t" style="right:810.50px;top:1330.99px;font-size:26px;line-height:26px;color:#4c4c4c;">5</div>
<div class="t" style="right:518.00px;top:1330.99px;font-size:26px;line-height:26px;color:#4c4c4c;"><span class="one">1<svg viewBox="0 0 1139 1472" style="fill:#4c4c4c"><path transform="matrix(1 0 0 -1 0 1472)" d="M763 0H583V1147Q518 1085 412 1023Q306 961 223 930V1104Q373 1175 485 1276Q597 1377 644 1472H763Z"/></svg></span></div>
<div class="t" style="right:279.50px;top:1330.99px;font-size:26px;line-height:26px;color:#4c4c4c;"><span class="one">1<svg viewBox="0 0 1139 1472" style="fill:#4c4c4c"><path transform="matrix(1 0 0 -1 0 1472)" d="M763 0H583V1147Q518 1085 412 1023Q306 961 223 930V1104Q373 1175 485 1276Q597 1377 644 1472H763Z"/></svg></span></div>
<div class="t" style="left:2863.00px;top:1330.99px;font-size:26px;line-height:26px;color:#4c4c4c;">Padrão</div>
<div style="position:absolute;left:0px;top:1373px;width:3129px;height:53px;background:#ffffff;"></div>
<div style="position:absolute;left:0px;top:1426px;width:3129px;height:2px;background:#dee2e6;"></div>
<div class="cb" style="left:5px;top:1386px;"></div>
<div class="t" style="left:661.00px;top:1385.99px;font-size:26px;line-height:26px;color:#4c4c4c;">My Company Sequence out</div>
<div class="t" style="left:1314.00px;top:1385.99px;font-size:26px;line-height:26px;color:#4c4c4c;">WH/OUT/</div>
<div class="t" style="right:810.50px;top:1385.99px;font-size:26px;line-height:26px;color:#4c4c4c;">5</div>
<div class="t" style="right:518.00px;top:1385.99px;font-size:26px;line-height:26px;color:#4c4c4c;">8</div>
<div class="t" style="right:279.50px;top:1385.99px;font-size:26px;line-height:26px;color:#4c4c4c;"><span class="one">1<svg viewBox="0 0 1139 1472" style="fill:#4c4c4c"><path transform="matrix(1 0 0 -1 0 1472)" d="M763 0H583V1147Q518 1085 412 1023Q306 961 223 930V1104Q373 1175 485 1276Q597 1377 644 1472H763Z"/></svg></span></div>
<div class="t" style="left:2863.00px;top:1385.99px;font-size:26px;line-height:26px;color:#4c4c4c;">Padrão</div>
<div style="position:absolute;left:0px;top:1428px;width:3129px;height:53px;background:#fbfbfb;"></div>
<div style="position:absolute;left:0px;top:1481px;width:3129px;height:2px;background:#dee2e6;"></div>
<div class="cb" style="left:5px;top:1441px;"></div>
<div class="t" style="left:661.00px;top:1440.99px;font-size:26px;line-height:26px;color:#4c4c4c;">My Company Sequence packing</div>
<div class="t" style="left:1314.00px;top:1440.99px;font-size:26px;line-height:26px;color:#4c4c4c;">WH/PACK/</div>
<div class="t" style="right:810.50px;top:1440.99px;font-size:26px;line-height:26px;color:#4c4c4c;">5</div>
<div class="t" style="right:518.00px;top:1440.99px;font-size:26px;line-height:26px;color:#4c4c4c;"><span class="one">1<svg viewBox="0 0 1139 1472" style="fill:#4c4c4c"><path transform="matrix(1 0 0 -1 0 1472)" d="M763 0H583V1147Q518 1085 412 1023Q306 961 223 930V1104Q373 1175 485 1276Q597 1377 644 1472H763Z"/></svg></span></div>
<div class="t" style="right:279.50px;top:1440.99px;font-size:26px;line-height:26px;color:#4c4c4c;"><span class="one">1<svg viewBox="0 0 1139 1472" style="fill:#4c4c4c"><path transform="matrix(1 0 0 -1 0 1472)" d="M763 0H583V1147Q518 1085 412 1023Q306 961 223 930V1104Q373 1175 485 1276Q597 1377 644 1472H763Z"/></svg></span></div>
<div class="t" style="left:2863.00px;top:1440.99px;font-size:26px;line-height:26px;color:#4c4c4c;">Padrão</div>
<div style="position:absolute;left:0px;top:1483px;width:3129px;height:53px;background:#ffffff;"></div>
<div style="position:absolute;left:0px;top:1536px;width:3129px;height:2px;background:#dee2e6;"></div>
<div class="cb" style="left:5px;top:1496px;"></div>
<div class="t" style="left:661.00px;top:1495.99px;font-size:26px;line-height:26px;color:#4c4c4c;">My Company Sequence picking</div>
<div class="t" style="left:1314.00px;top:1495.99px;font-size:26px;line-height:26px;color:#4c4c4c;">WH/PICK/</div>
<div class="t" style="right:810.50px;top:1495.99px;font-size:26px;line-height:26px;color:#4c4c4c;">5</div>
<div class="t" style="right:518.00px;top:1495.99px;font-size:26px;line-height:26px;color:#4c4c4c;"><span class="one">1<svg viewBox="0 0 1139 1472" style="fill:#4c4c4c"><path transform="matrix(1 0 0 -1 0 1472)" d="M763 0H583V1147Q518 1085 412 1023Q306 961 223 930V1104Q373 1175 485 1276Q597 1377 644 1472H763Z"/></svg></span></div>
<div class="t" style="right:279.50px;top:1495.99px;font-size:26px;line-height:26px;color:#4c4c4c;"><span class="one">1<svg viewBox="0 0 1139 1472" style="fill:#4c4c4c"><path transform="matrix(1 0 0 -1 0 1472)" d="M763 0H583V1147Q518 1085 412 1023Q306 961 223 930V1104Q373 1175 485 1276Q597 1377 644 1472H763Z"/></svg></span></div>
<div class="t" style="left:2863.00px;top:1495.99px;font-size:26px;line-height:26px;color:#4c4c4c;">Padrão</div>
<div style="position:absolute;left:593px;top:1094px;width:2204px;height:58px;box-sizing:border-box;border:5px solid #ed1c24;"></div>
</body></html>
